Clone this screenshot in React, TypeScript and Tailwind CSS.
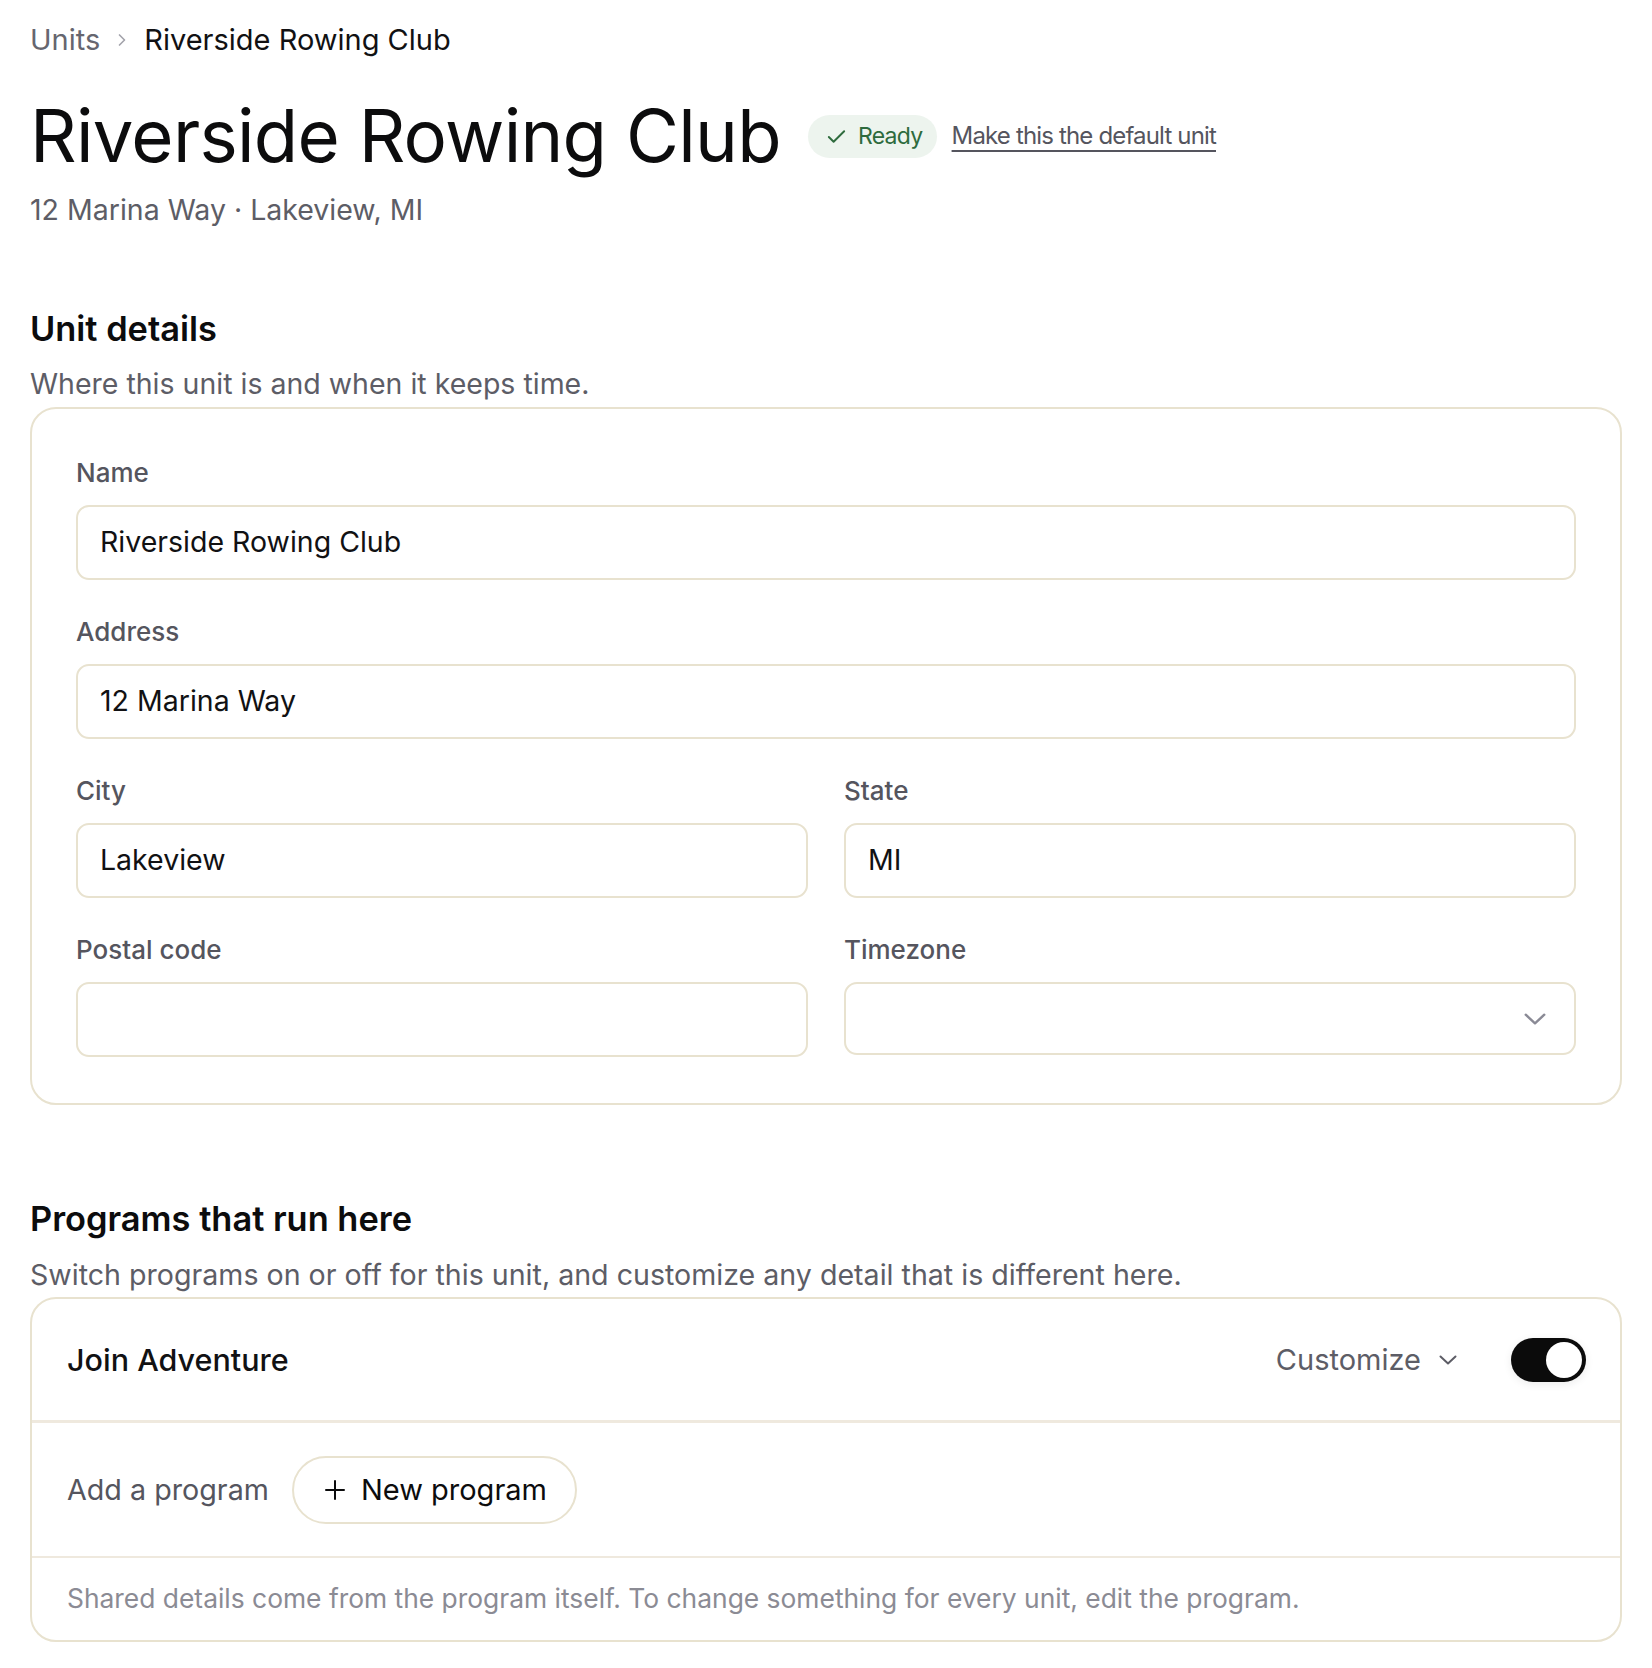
import React, { useState } from "react";

const font = { fontFamily: "Inter, 'Noto Sans', sans-serif" };

function Chevron({ className, w, h, sw }: { className?: string; w: number; h: number; sw: number }) {
  return (
    <svg
      viewBox={`0 0 ${w} ${h}`}
      width={w}
      height={h}
      fill="none"
      stroke="currentColor"
      strokeWidth={sw}
      strokeLinecap="round"
      strokeLinejoin="round"
      className={className}
    >
      <path d={`M${sw / 2 + 0.5} ${sw / 2 + 0.5}L${w / 2} ${h - sw / 2 - 0.5}L${w - sw / 2 - 0.5} ${sw / 2 + 0.5}`} />
    </svg>
  );
}

function Field({ label, value, select }: { label: string; value?: string; select?: boolean }) {
  return (
    <div className="flex flex-col">
      <label className="text-[26px] leading-[36px] font-medium text-[#55555e]">{label}</label>
      <div
        className={`mt-[14px] flex items-center justify-between rounded-[13px] border-2 border-[#e8e2cf] bg-white pl-[22px] pr-[28px] ${
          select ? "h-[73px]" : "h-[75px]"
        }`}
      >
        <span className="text-[28.5px] text-[#111113]">{value}</span>
        {select && <Chevron w={22} h={12} sw={2.4} className="text-[#8a8a95]" />}
      </div>
    </div>
  );
}

export default function App() {
  const [enabled, setEnabled] = useState(true);

  return (
    <div style={font} className="min-h-screen bg-white px-[30px] pt-[20px] pb-[25px] text-[#111113]">
      {/* Breadcrumb */}
      <nav className="flex h-[40px] items-center text-[29px] leading-[40px]">
        <span className="text-[#66666f]">Units</span>
        <svg viewBox="0 0 24 24" fill="none" stroke="currentColor" strokeWidth={2} strokeLinecap="round" strokeLinejoin="round" className="mx-[12px] h-[20px] w-[20px] text-[#a3a3ab]">
          <path d="M9 6l6 6-6 6" />
        </svg>
        <span className="text-[#111113]">Riverside Rowing Club</span>
      </nav>

      {/* Title row */}
      <div className="mt-[32px] flex h-[88px] items-center">
        <h1 className="text-[72.5px] leading-[88px] font-normal tracking-[-0.01em] text-[#0c0c0d]">Riverside Rowing Club</h1>
        <span className="ml-[27px] flex h-[43px] items-center rounded-full bg-[#edf4ee] pl-[17px] pr-[14px] text-[#2e6b3d]">
          <svg viewBox="0 0 24 24" fill="none" stroke="currentColor" strokeWidth={2} strokeLinecap="round" strokeLinejoin="round" className="h-[23px] w-[23px]">
            <path d="M4 12.5l5 5L20 6.5" />
          </svg>
          <span className="ml-[10px] text-[23px] tracking-[-0.03em]">Ready</span>
        </span>
        <a href="#" className="ml-[15px] text-[24px] tracking-[-0.035em] text-[#55555e] underline decoration-[2px] underline-offset-[6px]">
          Make this the default unit
        </a>
      </div>

      <p className="mt-[10px] text-[28.5px] leading-[40px] text-[#5d5d66]">12 Marina Way · Lakeview, MI</p>

      {/* Unit details */}
      <section className="mt-[77px]">
        <h2 className="text-[34.4px] leading-[44px] font-semibold text-[#0c0c0d]">Unit details</h2>
        <p className="mt-[13px] text-[28.5px] leading-[40px] text-[#5d5d66]">Where this unit is and when it keeps time.</p>
        <div className="mt-[3px] rounded-[26px] border-2 border-[#e8e2cf] px-[44px] pt-[46px] pb-[46px]">
          <div className="flex flex-col gap-[34px]">
            <Field label="Name" value="Riverside Rowing Club" />
            <Field label="Address" value="12 Marina Way" />
            <div className="grid grid-cols-2 gap-x-[36px] gap-y-[34px]">
              <Field label="City" value="Lakeview" />
              <Field label="State" value="MI" />
              <Field label="Postal code" value="" />
              <Field label="Timezone" value="" select />
            </div>
          </div>
        </div>
      </section>

      {/* Programs */}
      <section className="mt-[92px]">
        <h2 className="text-[34.4px] leading-[44px] font-semibold text-[#0c0c0d]">Programs that run here</h2>
        <p className="mt-[14px] text-[28.6px] leading-[40px] text-[#5d5d66]">
          Switch programs on or off for this unit, and customize any detail that is different here.
        </p>
        <div className="mt-[2px] overflow-hidden rounded-[26px] border-2 border-[#e8e2cf]">
          <div className="flex h-[124px] items-center justify-between border-b-[3px] border-[#efe9de] pl-[35px] pr-[34px]">
            <span className="text-[30.5px] font-medium text-[#111113]">Join Adventure</span>
            <div className="flex items-center">
              <button className="flex items-center text-[29px] text-[#5d5d66]">
                Customize
                <Chevron w={18} h={10} sw={2} className="ml-[18px] text-[#5d5d66]" />
              </button>
              <button
                onClick={() => setEnabled(!enabled)}
                className="ml-[54px] flex h-[44px] w-[75px] items-center rounded-full bg-[#0b0b0b] p-[4px] shadow-[0_2px_8px_rgba(0,0,0,0.08)]"
              >
                <span className={`h-[36px] w-[36px] rounded-full bg-white ${enabled ? "ml-auto" : ""}`} />
              </button>
            </div>
          </div>
          <div className="flex h-[135px] items-center border-b-2 border-[#efe9de] pl-[35px]">
            <span className="text-[28.7px] text-[#55555e]">Add a program</span>
            <button className="ml-[23px] flex h-[68px] items-center rounded-full border-2 border-[#e8e2cf] pl-[31px] pr-[28px] text-[29px] text-[#0c0c0d]">
              <svg viewBox="0 0 20 20" width={20} height={20} fill="none" stroke="currentColor" strokeWidth={2} strokeLinecap="round">
                <path d="M10 1v18M1 10h18" />
              </svg>
              <span className="ml-[16px]">New program</span>
            </button>
          </div>
          <div className="flex h-[82px] items-center pl-[35px]">
            <span className="text-[26.4px] text-[#8b8b94]">
              Shared details come from the program itself. To change something for every unit, edit the program.
            </span>
          </div>
        </div>
      </section>
    </div>
  );
}
